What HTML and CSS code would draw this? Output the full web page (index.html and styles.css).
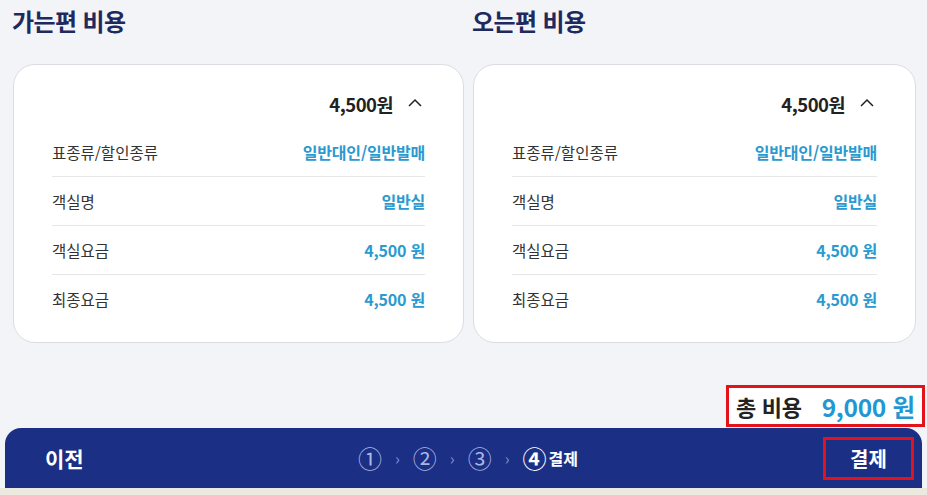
FILE: index.html
```html
<!DOCTYPE html>
<html lang="ko">
<head>
<meta charset="utf-8">
<link rel="stylesheet" href="styles.css">
</head>
<body>
<div class="page">
  <div class="cols">
    <section class="col">
      <h2 class="title">가는편 비용</h2>
      <div class="card">
        <div class="price-row">
          <span class="price">4,500원</span>
          <svg class="caret" viewBox="0 0 16 10" width="16" height="10"><polyline points="2,8 8,2 14,8" fill="none" stroke="#222" stroke-width="1.5"/></svg>
        </div>
        <div class="row"><span class="label">표종류/할인종류</span><span class="value">일반대인/일반발매</span></div>
        <div class="row"><span class="label">객실명</span><span class="value">일반실</span></div>
        <div class="row"><span class="label">객실요금</span><span class="value">4,500 원</span></div>
        <div class="row"><span class="label">최종요금</span><span class="value">4,500 원</span></div>
      </div>
    </section>
    <section class="col">
      <h2 class="title">오는편 비용</h2>
      <div class="card">
        <div class="price-row">
          <span class="price">4,500원</span>
          <svg class="caret" viewBox="0 0 16 10" width="16" height="10"><polyline points="2,8 8,2 14,8" fill="none" stroke="#222" stroke-width="1.5"/></svg>
        </div>
        <div class="row"><span class="label">표종류/할인종류</span><span class="value">일반대인/일반발매</span></div>
        <div class="row"><span class="label">객실명</span><span class="value">일반실</span></div>
        <div class="row"><span class="label">객실요금</span><span class="value">4,500 원</span></div>
        <div class="row"><span class="label">최종요금</span><span class="value">4,500 원</span></div>
      </div>
    </section>
  </div>
  <div class="total-wrap">
    <div class="total"><span class="total-label">총 비용</span><span class="total-value">9,000 원</span></div>
  </div>
  <div class="bar">
    <span class="prev">이전</span>
    <div class="steps">
      <span class="step">①</span><span class="arrow">›</span>
      <span class="step">②</span><span class="arrow">›</span>
      <span class="step">③</span><span class="arrow">›</span>
      <span class="step current">④</span><span class="step-name">결제</span>
    </div>
    <div class="pay-wrap"><span class="pay">결제</span></div>
  </div>
  <div class="strip"></div>
</div>
</body>
</html>
```

FILE: styles.css
```css
* { box-sizing: border-box; }
html, body { margin: 0; padding: 0; }
body {
  background: #f3f4f7;
  font-family: "Noto Sans CJK KR", "Noto Sans", sans-serif;
  color: #222;
  width: 927px;
  height: 495px;
  overflow: hidden;
}
.page { display: flex; flex-direction: column; height: 495px; }
.cols {
  display: grid;
  grid-template-columns: 452px 444px;
  column-gap: 8px;
  padding-left: 12px;
}
.title {
  margin: 5px 0 0 0;
  font-size: 24px;
  font-weight: 700;
  line-height: 32px;
  color: #1e2a5e;
  letter-spacing: -0.6px;
}
.card {
  margin-top: 27px;
  margin-left: 1px;
  background: #fff;
  border: 1px solid #dcdde2;
  border-radius: 22px;
  padding: 23px 38px 19px 38px;
}
.price-row {
  height: 32px;
  margin-bottom: 8px;
  display: flex;
  justify-content: flex-end;
  align-items: center;
}
.price {
  font-size: 18.5px;
  font-weight: 700;
  color: #222;
  letter-spacing: -0.5px;
}
.caret { margin-left: 14px; margin-right: 2px; margin-top: -3px; }
.row {
  height: 49px;
  display: flex;
  justify-content: space-between;
  align-items: center;
  border-bottom: 1px solid #e6e7ea;
}
.row:last-child { border-bottom: none; height: 48px; }
.label { font-size: 15.5px; color: #333; }
.value { font-size: 16px; font-weight: 700; color: #2a9ad0; letter-spacing: -0.2px; }
.total-wrap {
  display: flex;
  justify-content: flex-end;
  margin-top: 42px;
  padding-right: 2px;
}
.total {
  width: 199px;
  height: 42px;
  border: 3px solid #e3121b;
  background: #fff;
  display: flex;
  align-items: center;
  padding-left: 7px;
  gap: 20px;
  white-space: nowrap;
  overflow: hidden;
}
.total-label { font-size: 22px; font-weight: 700; color: #222; letter-spacing: -0.3px; }
.total-value { font-size: 24.5px; font-weight: 700; color: #1f98d3; letter-spacing: -0.3px; }
.bar {
  margin-top: 1px;
  margin-left: 5px;
  width: 917px;
  height: 60px;
  background: #1b2f84;
  border-radius: 16px 16px 0 0;
  display: grid;
  grid-template-columns: 1fr auto 1fr;
  align-items: center;
  padding-left: 9px;
}
.prev { color: #fff; font-size: 21px; font-weight: 700; margin-left: 31px; }
.steps { display: flex; align-items: center; }
.step { color: #a8b6e6; font-size: 24px; line-height: 1; }
.arrow { color: #7f90cc; font-size: 16px; margin: 0 13px; line-height: 1; }
.step.current { color: #fff; font-weight: 700; }
.step-name { color: #fff; font-size: 16px; font-weight: 700; margin-left: 2px; }
.pay-wrap { display: flex; justify-content: flex-end; padding-right: 8px; }
.pay {
  width: 91px;
  height: 43px;
  border: 3px solid #e3121b;
  display: flex;
  align-items: center;
  justify-content: center;
  color: #fff;
  font-size: 20px;
  font-weight: 700;
}
.strip { flex: 1; background: #ece9df; }
```
